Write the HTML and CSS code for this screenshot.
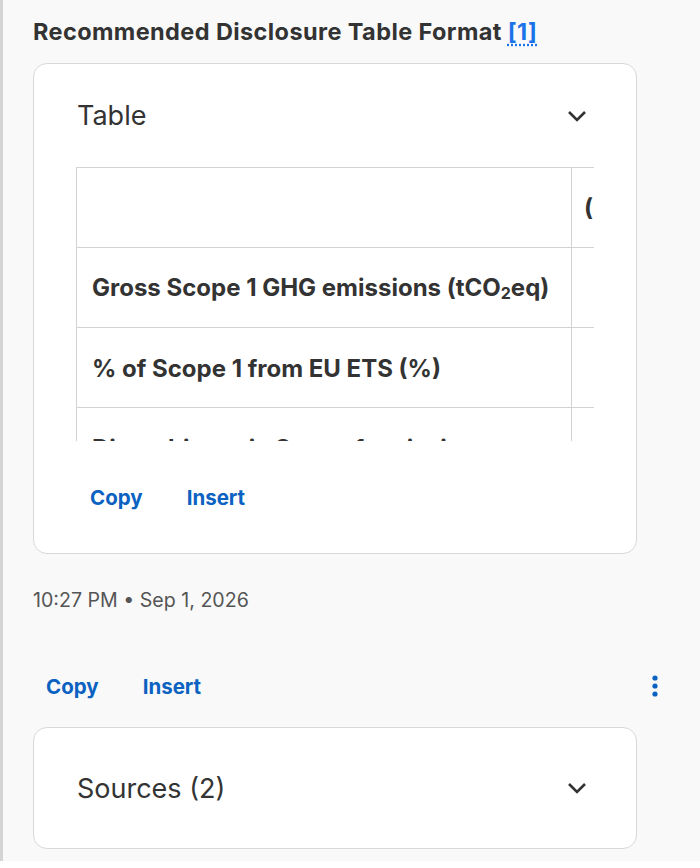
FILE: index.html
```html
<!DOCTYPE html>
<html lang="en">
<head>
    <meta charset="UTF-8">
    <meta name="viewport" content="width=device-width, initial-scale=1.0">
    <title>Recommended Disclosure Table Format</title>
    <link rel="stylesheet" href="styles.css">
</head>
<body>
    <div class="thread">
        <h2 class="answer-title">Recommended Disclosure Table Format <a href="#" class="cite">[1]</a></h2>

        <section class="card">
            <div class="card-head">
                <span class="card-title">Table</span>
                <svg class="chevron" width="22" height="14" viewBox="0 0 22 14"><path d="M3 3l8 8 8-8" fill="none" stroke="#333" stroke-width="2.6"/></svg>
            </div>
            <div class="table-view">
                <table class="disclosure">
                    <tr><th></th><th>(Reporting year)</th></tr>
                    <tr><td>Gross Scope 1 GHG emissions (tCO<sub>2</sub>eq)</td><td></td></tr>
                    <tr><td>% of Scope 1 from EU ETS (%)</td><td></td></tr>
                    <tr><td>Direct biogenic Scope 1 emissions</td><td></td></tr>
                </table>
            </div>
            <div class="actions in-card">
                <a href="#">Copy</a>
                <a href="#">Insert</a>
            </div>
        </section>

        <p class="timestamp">10:27 PM • Sep 1, 2026</p>

        <div class="actions message-actions">
            <a href="#">Copy</a>
            <a href="#">Insert</a>
            <svg class="kebab" width="8" height="22" viewBox="0 0 8 22"><circle cx="4" cy="3" r="2.6" fill="#0b62c1"/><circle cx="4" cy="11" r="2.6" fill="#0b62c1"/><circle cx="4" cy="19" r="2.6" fill="#0b62c1"/></svg>
        </div>

        <section class="card sources">
            <div class="card-head">
                <span class="card-title">Sources (2)</span>
                <svg class="chevron" width="22" height="14" viewBox="0 0 22 14"><path d="M3 3l8 8 8-8" fill="none" stroke="#333" stroke-width="2.6"/></svg>
            </div>
        </section>
    </div>
</body>
</html>
```

FILE: styles.css
```css
body {
    margin: 0;
    background: #fff;
    font-family: Inter, Roboto, sans-serif;
    color: #333;
}
.thread {
    height: 843px;
    padding: 18px 0 0 30px;
    background: #f9f9f9;
    border-left: 3px solid #d4d4d4;
}
.answer-title {
    margin: 0 0 17px;
    font-size: 23.5px;
    font-weight: 700;
    letter-spacing: 0.4px;
    line-height: 28px;
    color: #333;
}
.cite {
    color: #1a73e8;
    text-decoration: underline dotted;
    text-underline-offset: 4px;
}
.card {
    width: 602px;
    background: #fff;
    border: 1px solid #d8d8d8;
    border-radius: 14px;
}
.card-head {
    display: flex;
    justify-content: space-between;
    align-items: center;
    height: 103px;
    padding: 0 48px 0 43px;
}
.card-title {
    font-size: 27px;
    color: #333;
}
.table-view {
    margin-left: 42px;
    width: 518px;
    height: 274px;
    overflow: hidden;
}
.disclosure {
    border-collapse: collapse;
    table-layout: fixed;
    width: 700px;
}
.disclosure th,
.disclosure td {
    height: 78px;
    padding: 1px 15px 0 15px;
    border: 1px solid #d2d2d2;
    font-size: 24px;
    font-weight: 700;
    text-align: left;
    white-space: nowrap;
    color: #333;
}
.disclosure th + th {
    padding-left: 12px;
}
.disclosure th:first-child,
.disclosure td:first-child {
    width: 464px;
}
.disclosure sub {
    font-size: 16px;
    vertical-align: -3px;
}
.actions {
    display: flex;
    align-items: center;
    gap: 44px;
}
.actions a {
    color: #0b62c1;
    font-size: 20.5px;
    font-weight: 700;
    text-decoration: none;
}
.in-card {
    padding: 44px 0 43px 56px;
}
.timestamp {
    margin: 34px 0 0 0;
    font-size: 19.6px;
    color: #555;
}
.message-actions {
    padding: 60px 41px 0 13px;
    height: 28px;
}
.kebab {
    margin-left: auto;
}
.sources {
    margin-top: 27px;
}
.sources .card-head {
    height: 120px;
}
```
